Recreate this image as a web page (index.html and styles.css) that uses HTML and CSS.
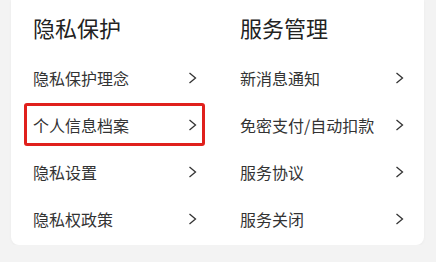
FILE: index.html
```html
<!DOCTYPE html>
<html lang="zh-CN">
  <head>
    <meta charset="UTF-8" />
    <meta name="viewport" content="width=device-width, initial-scale=1.0" />
    <title>设置</title>
    <link rel="stylesheet" href="styles.css">
  </head>
  <body>
    <div class="card">
      <div class="column">
        <h2 class="title">隐私保护</h2>
        <div class="item">隐私保护理念<span class="arrow"><svg width="9" height="12" viewBox="0 0 9 12"><path d="M1.5 1 L7.5 6 L1.5 11" /></svg></span></div>
        <div class="item highlight">个人信息档案<span class="arrow"><svg width="9" height="12" viewBox="0 0 9 12"><path d="M1.5 1 L7.5 6 L1.5 11" /></svg></span></div>
        <div class="item">隐私设置<span class="arrow"><svg width="9" height="12" viewBox="0 0 9 12"><path d="M1.5 1 L7.5 6 L1.5 11" /></svg></span></div>
        <div class="item">隐私权政策<span class="arrow"><svg width="9" height="12" viewBox="0 0 9 12"><path d="M1.5 1 L7.5 6 L1.5 11" /></svg></span></div>
      </div>
      <div class="column">
        <h2 class="title">服务管理</h2>
        <div class="item">新消息通知<span class="arrow"><svg width="9" height="12" viewBox="0 0 9 12"><path d="M1.5 1 L7.5 6 L1.5 11" /></svg></span></div>
        <div class="item">免密支付/自动扣款<span class="arrow"><svg width="9" height="12" viewBox="0 0 9 12"><path d="M1.5 1 L7.5 6 L1.5 11" /></svg></span></div>
        <div class="item">服务协议<span class="arrow"><svg width="9" height="12" viewBox="0 0 9 12"><path d="M1.5 1 L7.5 6 L1.5 11" /></svg></span></div>
        <div class="item">服务关闭<span class="arrow"><svg width="9" height="12" viewBox="0 0 9 12"><path d="M1.5 1 L7.5 6 L1.5 11" /></svg></span></div>
      </div>
    </div>
  </body>
</html>
```

FILE: styles.css
```css
body {
  margin: 0;
  padding: 0;
  background-color: #f3f3f3;
  font-family: "Noto Sans CJK SC", "Noto Sans", sans-serif;
  color: #333;
}
.card {
  margin-left: 11px;
  width: 391px;
  height: 245px;
  padding-left: 22px;
  background-color: white;
  border-radius: 0 0 8px 8px;
  box-shadow: 0 1px 3px rgba(0, 0, 0, 0.04);
  display: grid;
  grid-template-columns: 164px 164px;
  column-gap: 43px;
}
.column {
  display: flex;
  flex-direction: column;
}
.title {
  margin: 0;
  height: 54px;
  line-height: 54px;
  font-size: 22px;
  font-weight: normal;
  color: #222;
}
.item {
  position: relative;
  height: 47px;
  display: flex;
  align-items: center;
  justify-content: space-between;
  font-size: 16px;
  color: #333;
}
.arrow {
  display: flex;
  align-items: center;
}
.arrow svg path {
  fill: none;
  stroke: #333;
  stroke-width: 1.3;
}
.highlight::after {
  content: "";
  position: absolute;
  left: -9px;
  right: -8px;
  top: 2px;
  bottom: 2px;
  border: 3px solid #e0201c;
  border-radius: 3px;
}
```
